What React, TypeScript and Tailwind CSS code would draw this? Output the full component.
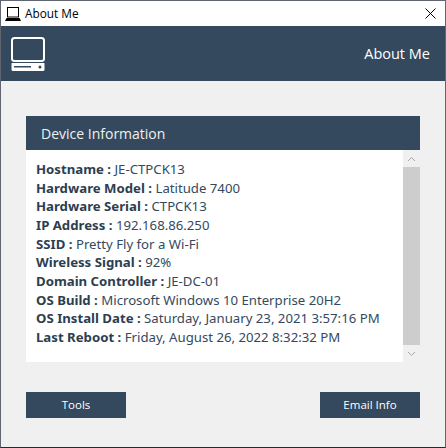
const rows: [string, string][] = [
  ["Hostname", "JE-CTPCK13"],
  ["Hardware Model", "Latitude 7400"],
  ["Hardware Serial", "CTPCK13"],
  ["IP Address", "192.168.86.250"],
  ["SSID", "Pretty Fly for a Wi-Fi"],
  ["Wireless Signal", "92%"],
  ["Domain Controller", "JE-DC-01"],
  ["OS Build", "Microsoft Windows 10 Enterprise 20H2"],
  ["OS Install Date", "Saturday, January 23, 2021 3:57:16 PM"],
  ["Last Reboot", "Friday, August 26, 2022 8:32:32 PM"],
];

function SmallLaptop() {
  return (
    <svg width="16" height="14" viewBox="0 0 16 14" fill="none" className="shrink-0">
      <rect x="2.5" y="0.5" width="11" height="9.5" stroke="#000" />
      <path d="M0 14 L1.5 11 H14.5 L16 14 Z" fill="#000" />
    </svg>
  );
}

function BigComputer() {
  return (
    <svg width="34" height="34" viewBox="0 0 34 34" fill="none" className="shrink-0">
      <rect x="1" y="1" width="32" height="23" rx="2.5" stroke="#fff" strokeWidth="2" />
      <path d="M1 26h32a.5.5 0 0 1 .5.5v6a1.5 1.5 0 0 1-1.5 1.5H2a1.5 1.5 0 0 1-1.5-1.5v-6A.5.5 0 0 1 1 26Z" fill="#fff" />
      <rect x="3" y="29" width="17" height="1.5" fill="#34495e" />
      <circle cx="29" cy="30" r="1.5" fill="#34495e" />
    </svg>
  );
}

export default function App() {
  return (
    <div className="flex h-[448px] w-[446px] flex-col border border-[#5f6670] border-b-[#1f2a38] bg-[#f0f0f0] font-['Open_Sans',sans-serif]">
      <div className="flex h-[25px] shrink-0 items-center bg-white pl-[4px] pr-[9px]">
        <SmallLaptop />
        <span className="ml-[4px] text-[11.8px] text-black">About Me</span>
        <svg width="11" height="11" viewBox="0 0 11 11" className="ml-auto" fill="none">
          <path d="M0.5 0.5 L10.5 10.5 M10.5 0.5 L0.5 10.5" stroke="#000" />
        </svg>
      </div>
      <div className="flex h-[55px] shrink-0 items-center justify-between bg-[#34495e] pl-[10px] pr-[15px]">
        <BigComputer />
        <span className="text-[14.5px] text-white">About Me</span>
      </div>
      <div className="flex flex-1 flex-col px-[25px] pt-[35px]">
        <div className="flex h-[34px] w-[394px] shrink-0 items-center bg-[#34495e] pl-[15px] text-[14px] text-[#f0f0f0]">
          Device Information
        </div>
        <div className="flex h-[212px] w-[394px] shrink-0 bg-white">
          <div className="flex-1 pl-[10px] pt-[10px] font-['Noto_Sans',sans-serif] text-[13.2px] leading-[18.67px] text-[#34495e]">
            {rows.map(([k, v]) => (
              <div key={k} className="whitespace-nowrap">
                <span className="font-bold text-[#2c3e50]">{k} : </span>
                <span>{v}</span>
              </div>
            ))}
          </div>
          <div className="flex w-[17px] shrink-0 flex-col bg-[#f0f0f0]">
            <div className="flex h-[17px] items-center justify-center">
              <svg width="9" height="6" viewBox="0 0 9 6" fill="none">
                <path d="M1 5 L4.5 1.5 L8 5" stroke="#a6a6a6" strokeWidth="1" />
              </svg>
            </div>
            <div className="flex-1 bg-[#cdcdcd]" />
            <div className="flex h-[17px] items-center justify-center">
              <svg width="9" height="6" viewBox="0 0 9 6" fill="none">
                <path d="M1 1 L4.5 4.5 L8 1" stroke="#a6a6a6" strokeWidth="1" />
              </svg>
            </div>
          </div>
        </div>
        <div className="mt-[30px] flex w-[394px] justify-between">
          <button className="flex h-[26px] w-[100px] items-center justify-center bg-[#34495e] text-[11.5px] text-white">
            Tools
          </button>
          <button className="flex h-[26px] w-[100px] items-center justify-center bg-[#34495e] text-[11.5px] text-white">
            Email Info
          </button>
        </div>
      </div>
    </div>
  );
}
